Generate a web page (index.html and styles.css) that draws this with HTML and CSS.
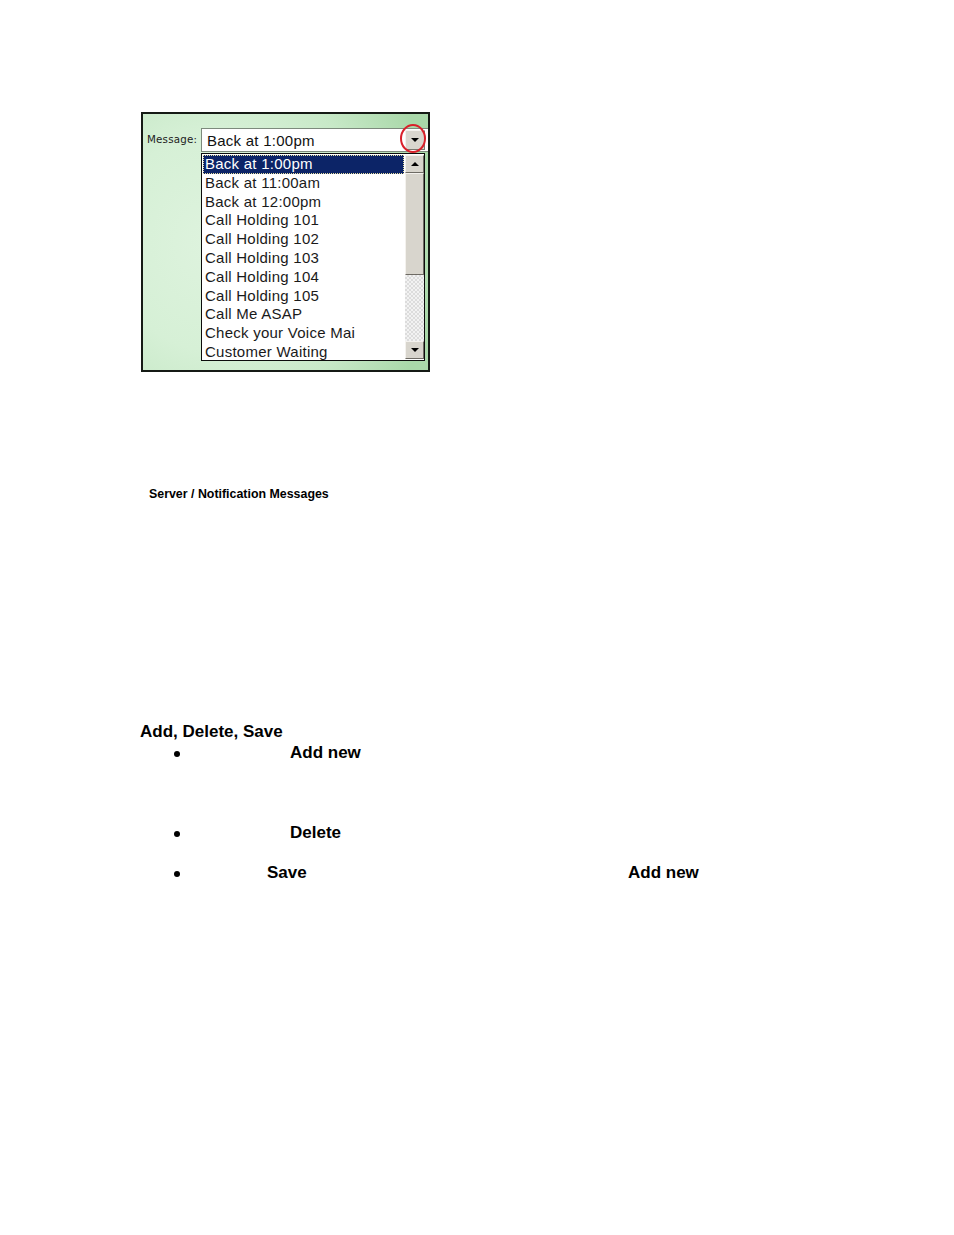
FILE: index.html
```html
<!DOCTYPE html>
<html>
<head>
<meta charset="utf-8">
<link rel="stylesheet" href="styles.css">
</head>
<body>
<div class="page">
  <div class="figure">
    <div class="label">Message:</div>
    <div class="combo">
      <div class="select">
        <span class="select-text">Back at 1:00pm</span>
        <span class="select-btn"><span class="tri-down"></span></span>
        <span class="ring"></span>
      </div>
      <div class="list">
        <div class="items">
          <div class="item sel">Back at 1:00pm</div>
          <div class="item">Back at 11:00am</div>
          <div class="item">Back at 12:00pm</div>
          <div class="item">Call Holding 101</div>
          <div class="item">Call Holding 102</div>
          <div class="item">Call Holding 103</div>
          <div class="item">Call Holding 104</div>
          <div class="item">Call Holding 105</div>
          <div class="item">Call Me ASAP</div>
          <div class="item">Check your Voice Mai</div>
          <div class="item">Customer Waiting</div>
        </div>
        <div class="scrollbar">
          <div class="sb-btn"><span class="tri-up"></span></div>
          <div class="sb-thumb"></div>
          <div class="sb-track"></div>
          <div class="sb-btn"><span class="tri-down"></span></div>
        </div>
      </div>
    </div>
  </div>

  <p class="caption">Server / Notification Messages</p>

  <h3 class="heading">Add, Delete, Save</h3>
  <ul class="bullets">
    <li class="b1"><span class="dot"><span class="dot-mark"></span></span><span class="t1">Add new</span></li>
    <li class="b2"><span class="dot"><span class="dot-mark"></span></span><span class="t1">Delete</span></li>
    <li class="b3"><span class="dot"><span class="dot-mark"></span></span><span class="t2">Save</span><span class="t3">Add new</span></li>
  </ul>
</div>
</body>
</html>
```
FILE: styles.css
```css
html, body {
  margin: 0;
  padding: 0;
  background: #ffffff;
}
body {
  font-family: "Liberation Sans", Arial, sans-serif;
  color: #000;
}
.page {
  width: 954px;
  height: 1235px;
  padding-top: 112px;
  box-sizing: border-box;
}

/* ---------- figure ---------- */
.figure {
  margin-left: 141px;
  width: 289px;
  height: 260px;
  box-sizing: border-box;
  border: 2px solid #151a15;
  background:
    radial-gradient(ellipse 80% 95% at 25% 50%, #def3de 0%, #d6f0d6 45%, #c8e9c8 70%, #a9d8a9 100%);
  display: flex;
  padding-top: 14px;
}
.label {
  width: 58px;
  box-sizing: border-box;
  padding-left: 4px;
  padding-top: 5px;
  font-family: "DejaVu Sans", Verdana, sans-serif;
  font-size: 10.3px;
  letter-spacing: 0.2px;
  color: #222;
}
.combo {
  width: 227px;
  display: flex;
  flex-direction: column;
}
.select {
  position: relative;
  height: 24px;
  box-sizing: border-box;
  border: 1px solid #7d8a7d;
  border-right: none;
  background: #fff;
  display: flex;
  align-items: center;
}
.select-text {
  flex: 1;
  padding-left: 5px;
  font-size: 15px;
  letter-spacing: 0.25px;
  color: #111;
}
.select-btn {
  width: 20px;
  height: 20px;
  margin-right: 3px;
  box-sizing: border-box;
  background: #d9d6ce;
  border: 1px solid;
  border-color: #f4f2ee #7a776f #7a776f #f4f2ee;
  display: flex;
  align-items: center;
  justify-content: center;
}
.ring {
  position: absolute;
  left: 198px;
  top: -5px;
  width: 26px;
  height: 29px;
  box-sizing: border-box;
  border: 2px solid #d9202a;
  border-radius: 50%;
}
.tri-down {
  width: 0;
  height: 0;
  border-left: 4px solid transparent;
  border-right: 4px solid transparent;
  border-top: 4px solid #000;
}
.tri-up {
  width: 0;
  height: 0;
  border-left: 4px solid transparent;
  border-right: 4px solid transparent;
  border-bottom: 4px solid #000;
}

.list {
  margin-top: 1px;
  width: 224px;
  height: 208px;
  box-sizing: border-box;
  border: 1px solid #0c0c0c;
  background: #fff;
  display: flex;
  overflow: hidden;
}
.items {
  flex: 1;
  padding: 1px 1px 0 1px;
  overflow: hidden;
}
.item {
  height: 18.8px;
  line-height: 18.8px;
  padding-left: 2px;
  font-size: 15px;
  letter-spacing: 0.25px;
  color: #1a1a1a;
  white-space: nowrap;
  box-sizing: border-box;
}
.item.sel {
  background: #0c2467;
  color: #fff;
  outline: 1px dotted #e8e0a0;
  outline-offset: -1px;
}
.scrollbar {
  width: 19px;
  padding: 1px 0;
  display: flex;
  flex-direction: column;
}
.sb-btn {
  height: 18px;
  box-sizing: border-box;
  background: #d8d5cd;
  border: 1px solid;
  border-color: #f4f2ee #6e6b64 #6e6b64 #f4f2ee;
  display: flex;
  align-items: center;
  justify-content: center;
}
.sb-thumb {
  height: 102px;
  box-sizing: border-box;
  background: #d8d5cd;
  border: 1px solid;
  border-color: #f4f2ee #6e6b64 #6e6b64 #f4f2ee;
}
.sb-track {
  flex: 1;
  background-color: #f2f2f2;
  background-image:
    linear-gradient(45deg, #dcdcdc 25%, transparent 25%, transparent 75%, #dcdcdc 75%),
    linear-gradient(45deg, #dcdcdc 25%, transparent 25%, transparent 75%, #dcdcdc 75%);
  background-size: 4px 4px;
  background-position: 0 0, 2px 2px;
}

/* ---------- text ---------- */
.caption {
  margin: 115px 0 0 149px;
  font-size: 12.4px;
  font-weight: bold;
  line-height: 14px;
}
.heading {
  margin: 221px 0 0 140px;
  font-size: 17px;
  font-weight: bold;
  line-height: 19px;
}
.bullets {
  list-style: none;
  margin: 2px 0 0 0;
  padding: 0;
}
.bullets li {
  display: flex;
  font-size: 17px;
  font-weight: bold;
  line-height: 19px;
}
.bullets .b2 { margin-top: 61px; }
.bullets .b3 { margin-top: 21px; }
.dot {
  width: 116px;
  padding-left: 174px;
  display: flex;
  align-items: center;
  padding-top: 2px;
  box-sizing: content-box;
}
.dot-mark {
  width: 6px;
  height: 6px;
  border-radius: 50%;
  background: #000;
}
.t2 { margin-left: -23px; width: 361px; }
```
